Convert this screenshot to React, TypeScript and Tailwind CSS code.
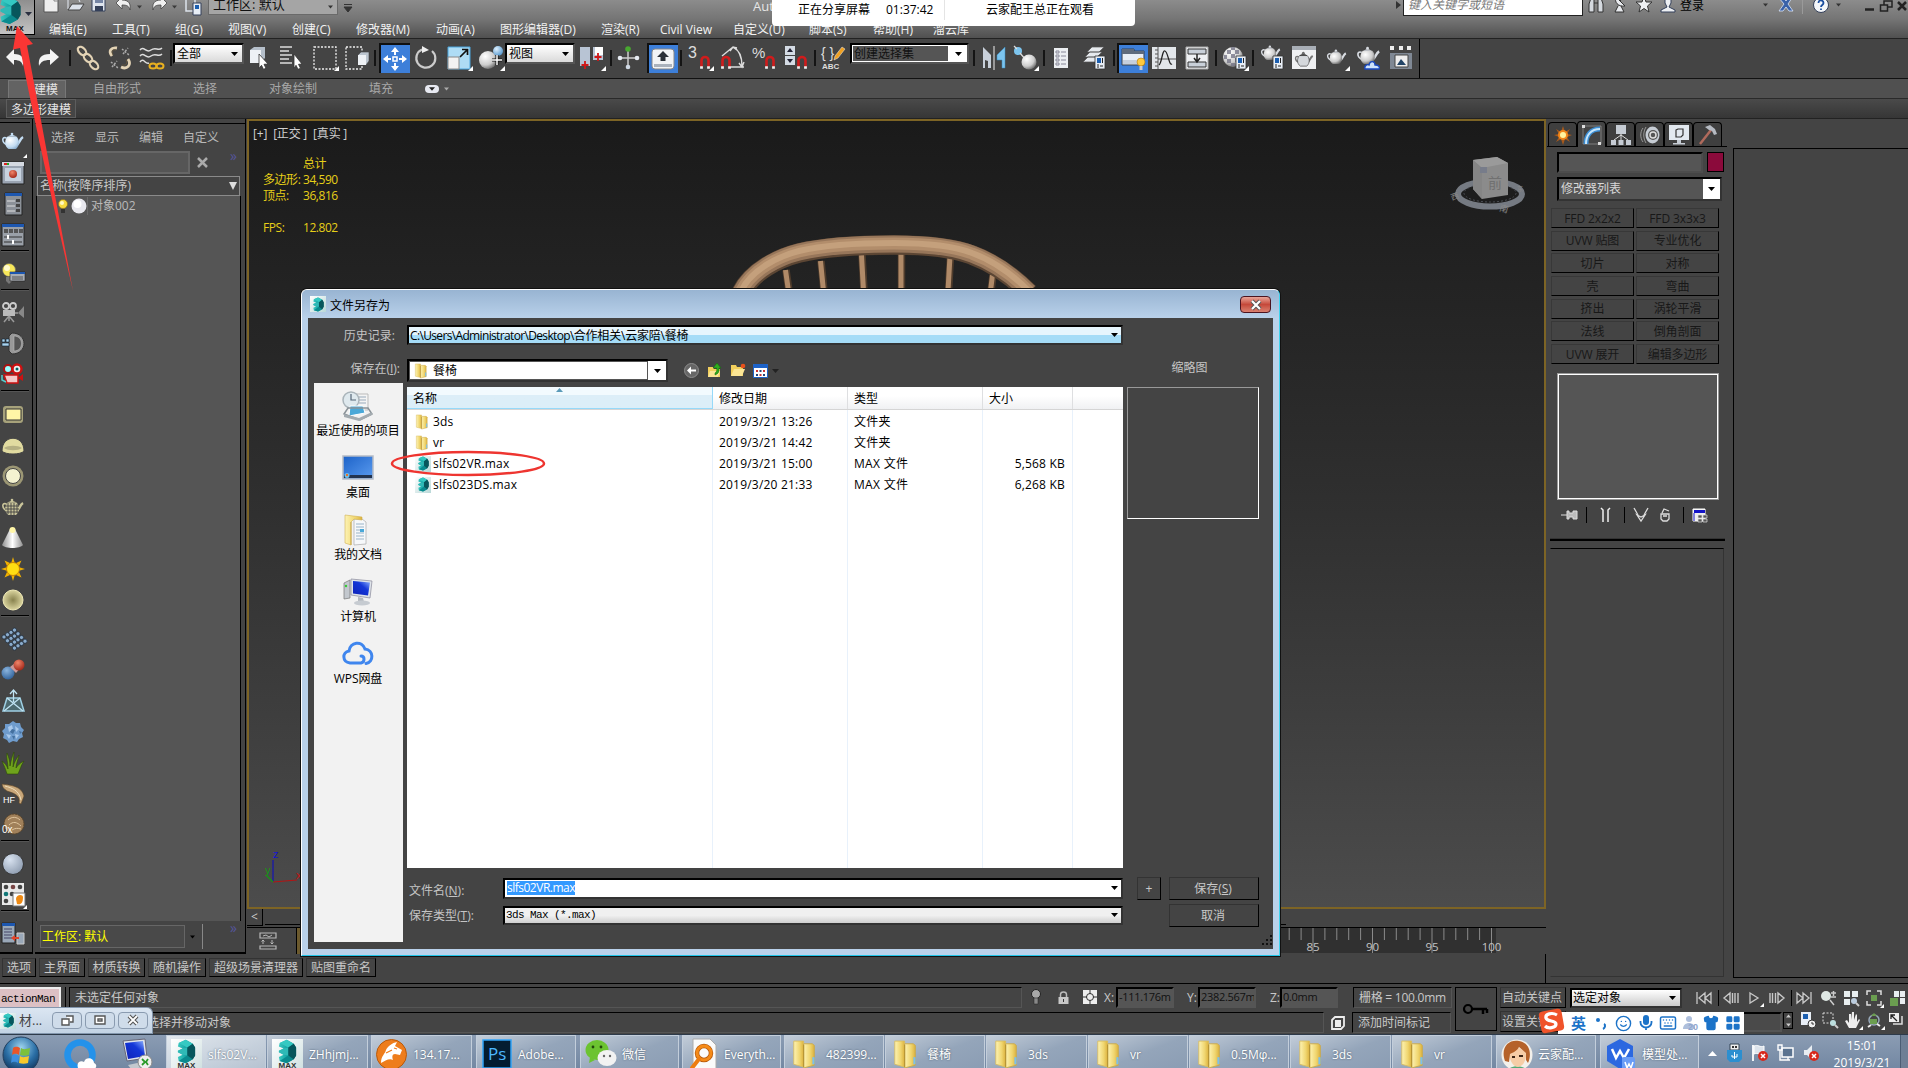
import React from "react";
import { Keyboard, Smile, Shirt, LayoutGrid } from "lucide-react";

type Kids = { children?: React.ReactNode };

const Svg = ({ w = 24, h = 24, vb, children }: Kids & { w?: number; h?: number; vb?: string }) => (
  <svg width={w} height={h} viewBox={vb ?? `0 0 ${w} ${h}`} className="block shrink-0 overflow-visible" fill="none">
    {children}
  </svg>
);

/* Shared gradients */
const Defs = () => (
  <svg width="0" height="0" className="absolute">
    <defs>
      <radialGradient id="gBall" cx="0.35" cy="0.3" r="0.8"><stop offset="0" stopColor="#fff" /><stop offset="0.6" stopColor="#ccc" /><stop offset="1" stopColor="#555" /></radialGradient>
      <radialGradient id="gBlueBall" cx="0.35" cy="0.3" r="0.8"><stop offset="0" stopColor="#dff1ff" /><stop offset="1" stopColor="#4a8fc8" /></radialGradient>
      <radialGradient id="gPaleBlue" cx="0.35" cy="0.3" r="0.9"><stop offset="0" stopColor="#ffffff" /><stop offset="0.6" stopColor="#c3dcf2" /><stop offset="1" stopColor="#6c93b8" /></radialGradient>
      <radialGradient id="gSteel" cx="0.35" cy="0.3" r="0.9"><stop offset="0" stopColor="#d8e2f0" /><stop offset="1" stopColor="#7f8ea3" /></radialGradient>
      <radialGradient id="gRed" cx="0.4" cy="0.3" r="0.8"><stop offset="0" stopColor="#f0856a" /><stop offset="1" stopColor="#9a1d10" /></radialGradient>
      <radialGradient id="gNavy" cx="0.4" cy="0.3" r="0.8"><stop offset="0" stopColor="#8ab4dd" /><stop offset="1" stopColor="#285a94" /></radialGradient>
      <radialGradient id="gCream" cx="0.5" cy="0.5" r="0.6"><stop offset="0" stopColor="#88824e" /><stop offset="1" stopColor="#ece6b0" /></radialGradient>
      <linearGradient id="gCone" x1="0" x2="1"><stop offset="0" stopColor="#8f8f8f" /><stop offset="0.5" stopColor="#ffffff" /><stop offset="1" stopColor="#8f8f8f" /></linearGradient>
      <linearGradient id="gFold" x1="0" x2="1"><stop offset="0" stopColor="#fdf3b4" /><stop offset="0.6" stopColor="#f0d670" /><stop offset="1" stopColor="#dcb23e" /></linearGradient>
      <linearGradient id="gTeal" x1="0" x2="1"><stop offset="0" stopColor="#3cc7c0" /><stop offset="0.5" stopColor="#11a3a3" /><stop offset="1" stopColor="#0b5d63" /></linearGradient>
      <linearGradient id="gScreen" x1="0" y1="1" x2="1" y2="0"><stop offset="0" stopColor="#0f22b8" /><stop offset="0.6" stopColor="#1437d8" /><stop offset="1" stopColor="#8fb4ff" /></linearGradient>
      <linearGradient id="gDesk" x1="0" y1="0" x2="1" y2="1"><stop offset="0" stopColor="#1c62c8" /><stop offset="1" stopColor="#5b9cf0" /></linearGradient>
      <radialGradient id="gOrb" cx="0.5" cy="0.3" r="0.75"><stop offset="0" stopColor="#9ed4ee" /><stop offset="0.55" stopColor="#2b6fa6" /><stop offset="1" stopColor="#0b2c50" /></radialGradient>
    </defs>
  </svg>
);

/* ---------- reusable pieces ---------- */
const MaxMark = ({ s = 16 }: { s?: number }) => (
  <Svg w={s} h={s} vb="0 0 16 16">
    <path d="M3 2.500L7.500.500 12 3l1.500 2.500v5L12 13l-4.500 2.500L3 14l-.5-2.500L5.500 10 2.500 8.500v-1L5.500 6 2.500 4.800z" fill="url(#gTeal)" />
    <path d="M3 2.500L7.500.500 12 3 8.500 5.500z" fill="#35c9c2" />
    <path d="M5.500 6l3-.5v5l-3-.5L2.500 8.500v-1z" fill="#2fb9b6" />
    <path d="M3 14l5.500-3.500L12 13l-4.500 2.500z" fill="#0a8a8e" />
    <path d="M12 3L8.500 5.500v5L12 13l1.500-2.500v-5z" fill="#07565c" />
  </Svg>
);
const MaxFile = () => (
  <div className="flex h-4 w-4 items-center justify-center bg-gradient-to-br from-white to-[#b9d8d8]"><MaxMark s={15} /></div>
);
const Folder = ({ w = 14, h = 17 }: { w?: number; h?: number }) => (
  <Svg w={w} h={h} vb="0 0 14 17">
    <path d="M1 1h5.500v14.500L1 14z" fill="url(#gFold)" stroke="#d8bd62" strokeWidth=".5" />
    <path d="M6.500 2.500h5l1 1v11L6.500 16z" fill="url(#gFold)" stroke="#c9a84a" strokeWidth=".5" />
    <path d="M6.500 3v12.500" stroke="#b89635" strokeWidth=".7" />
    <path d="M12 10v4" stroke="#7cc0ea" strokeWidth="1.200" />
  </Svg>
);
const Down = ({ c = "#000", w = 7 }: { c?: string; w?: number }) => (
  <Svg w={w} h={4} vb="0 0 7 4"><path d="M0 0h7L3.500 4z" fill={c} /></Svg>
);
const Corner = () => <path d="M26 20v5h-5z" fill="#fff" />;
const Teapot = ({ x = 0, y = 0, s = 1, f = "url(#gBall)", line = "#d8dce2" }: { x?: number; y?: number; s?: number; f?: string; line?: string }) => (
  <g transform={`translate(${x} ${y}) scale(${s})`}>
    <path d="M15.500 15c3-1 3-6 6.500-8" stroke={line} strokeWidth="2.400" />
    <path d="M5.500 8C1 6 0 12 6 15" stroke={line} strokeWidth="1.600" />
    <path d="M6.500 6.500h9c3 3 3.500 9-.5 12.500H7.500C3 16 3.500 9.500 6.500 6.500z" fill={f} />
    <path d="M7 6.500c2-2 6-2 8 0z" fill={line} /><circle cx="11" cy="4" r="1.300" fill={line} />
  </g>
);
const MiniPanel = ({ x, y }: { x: number; y: number }) => (
  <g transform={`translate(${x} ${y})`}>
    <path d="M0 0h10v13H0z" fill="#e8eef6" stroke="#333" strokeWidth=".8" />
    <path d="M2 2h4v5H2z" fill="#1c5fb0" /><path d="M7.500 2v5M2 9h2M2 11h2M5 10h3" stroke="#222" />
  </g>
);
const Magnet = ({ x, y }: { x: number; y: number }) => (
  <g transform={`translate(${x} ${y})`}>
    <path d="M1.500 11V4.500a3.500 3.500 0 017 0V11" stroke="#d01c1c" strokeWidth="2.600" />
    <path d="M.1 11.500h2.800M7.100 11.500h2.800" stroke="#eee" strokeWidth="2.500" />
  </g>
);

/* ---------- title bar + menus ---------- */
const menus: [string, string][] = [
  ["编辑(E)", "w-[63px]"], ["工具(T)", "w-[63px]"], ["组(G)", "w-[53px]"], ["视图(V)", "w-[64px]"], ["创建(C)", "w-[64px]"],
  ["修改器(M)", "w-[80px]"], ["动画(A)", "w-[64px]"], ["图形编辑器(D)", "w-[101px]"], ["渲染(R)", "w-[59px]"], ["Civil View", "w-[73px]"],
  ["自定义(U)", "w-[76px]"], ["脚本(S)", "w-[64px]"], ["帮助(H)", "w-[60px]"], ["溜云库", "w-[40px]"],
];

const Header = () => (
  <div className="flex h-[39px] shrink-0 border-b border-[#222] bg-gradient-to-b from-[#8c8c8c] via-[#757575] to-[#505050]">
    <div className="flex h-[35px] w-[35px] shrink-0 flex-col border-b border-r border-black bg-gradient-to-b from-[#8f8f8f] to-[#c4c4c4]">
      <div className="flex h-[24px] items-center">
        <div className="-ml-[4px] -mt-[4px]"><MaxMark s={29} /></div>
        <div className="mt-1"><Down c="#2a2f40" /></div>
      </div>
      <div className="pl-[6px] font-['Liberation_Sans'] text-[8px] font-bold leading-[9px] text-[#111]">MAX</div>
    </div>
    <div className="flex flex-1 flex-col">
      <div className="flex h-[17px] items-start">
        <div className="flex w-[173px] items-start pl-2">
          <div className="w-6"><Svg w={16} h={13}><path d="M1-4h14v16H1z" fill="#eee" stroke="#555" /><path d="M11-3v4h4" stroke="#888" /></Svg></div>
          <div className="w-6"><Svg w={18} h={13}><path d="M1 9V-2h10l2 4" stroke="#e6ecf5" /><path d="M1 10L5 4h12l-4 6z" fill="#dde3ec" stroke="#444" /></Svg></div>
          <div className="w-6"><Svg w={16} h={13}><path d="M1-3h13v14H1z" fill="#dfe5ee" stroke="#34405a" /><path d="M4 6h8v5H4z" fill="#34405a" /><path d="M4-2h8v5H4z" fill="#7585a5" /></Svg></div>
          <div className="flex w-[35px] items-center gap-1"><Svg w={18} h={13}><path d="M1 3l6-6v3c7 0 9 4 8 10-1-4-3-5-8-5v4z" fill="#f1f1f1" stroke="#444" strokeWidth=".8" /></Svg><Down c="#3a3a3a" w={5} /></div>
          <div className="flex w-[35px] items-center gap-1"><Svg w={18} h={13}><path d="M17 3l-6-6v3C4 0 2 4 3 10c1-4 3-5 8-5v4z" fill="#f1f1f1" stroke="#444" strokeWidth=".8" /></Svg><Down c="#3a3a3a" w={5} /></div>
          <div><Svg w={18} h={15}><path d="M1-2h9v13H1z" fill="none" stroke="#dde3ec" strokeWidth="1.500" /><path d="M8 3h8v12H8z" fill="#e8eef6" stroke="#34405a" /><path d="M10 5h4v4h-4z" fill="#1c5fb0" /></Svg></div>
        </div>
        <div className="flex h-[15px] w-[130px] items-center justify-between border border-t-0 border-[#6a6a6a] bg-[#a5a5a5] pl-1 pr-1 text-[13px] leading-none text-[#111]"><span className="-mt-[6px]">工作区: 默认</span><Down c="#333" w={5} /></div>
        <div className="ml-[6px] mt-[4px]"><Svg w={8} h={8}><path d="M0 .5h8M0 3h8L4 8z" stroke="#333" fill="#333" /></Svg></div>
        <div className="ml-[401px] text-[13px] leading-[12px] text-[#e6e6e6]">Aut</div>
        <div className="ml-auto flex h-[16px] w-[512px] items-start">
          <div className="mt-[1px] w-[7px]"><Svg w={5} h={8}><path d="M0 0l5 4-5 4z" fill="#333" /></Svg></div>
          <div className="h-[16px] w-[180px] border border-t-0 border-[#222] bg-white pl-1 text-[12px] italic leading-[10px] text-[#777]">键入关键字或短语</div>
          <div className="flex w-[97px] justify-between pl-[5px] pr-[4px]">
            <Svg w={16} h={13}><path d="M1 12V4l2-6h3v14zM10 12V-2h3l2 6v8zM6 3h4" fill="#d5d9df" stroke="#333" /></Svg>
            <Svg w={16} h={13}><path d="M4-3c-2 5 2 10 9 9zM6 6l-3 6h9L9 6M8 1l4-4" fill="#e8eaee" stroke="#333" /></Svg>
            <Svg w={16} h={13}><path d="M8-4l2 6h6l-4.500 4L13 12 8 8.500 3 12l1.500-6L0 2h6z" fill="#eef0f3" stroke="#333" /></Svg>
            <Svg w={16} h={13}><path d="M5-4h6v7l-2 4 6 3v2H1v-2l6-3-2-4z" fill="#eef0f3" stroke="#34405a" /></Svg>
          </div>
          <div className="w-[83px] text-[12px] leading-[11px] text-black">登录</div>
          <div className="mt-[3px] w-[15px]"><Down c="#333" w={5} /></div>
          <Svg w={15} h={12}><path d="M1-2l5 6-5 7h4l3-4 3 4h4L10 4l4-6h-4L8 1 6-2z" fill="#3a62a8" stroke="#dbe6fb" strokeWidth=".8" /></Svg>
          <div className="ml-[9px] h-[14px] w-px bg-[#9a9a9a]" />
          <div className="ml-[10px]"><Svg w={16} h={13}><circle cx="8" cy="5" r="7.500" fill="#f5f7fa" stroke="#34405a" /><path d="M5.500 3c0-4 5-3 5 0 0 2-2.500 2-2.500 4M8 8.500v1.500" stroke="#1c4fa0" strokeWidth="1.800" /></Svg></div>
          <div className="ml-[7px] mt-[3px]"><Down c="#333" w={5} /></div>
          <div className="ml-[23px] flex gap-[5px]">
            <Svg w={11} h={12}><path d="M1 9.500h9" stroke="#222" strokeWidth="2.500" /></Svg>
            <Svg w={12} h={12}><path d="M4 5V1h8v6H8M.5 5h7v6h-7z" stroke="#222" strokeWidth="1.500" /></Svg>
            <Svg w={10} h={12}><path d="M1 2l8 8M9 2l-8 8" stroke="#222" strokeWidth="2.500" /></Svg>
          </div>
        </div>
      </div>
      <div className="flex h-[21px] items-center pl-[14px] pt-[3px] text-[12px] leading-[17px] text-[#f2f2f2]">
        {menus.map(([m, w]) => <div key={m} className={w + " shrink-0 whitespace-nowrap"}>{m}</div>)}
      </div>
    </div>
  </div>
);

/* ---------- main toolbar ---------- */
const Cell = ({ w, children }: Kids & { w: string }) => <div className={w + " flex shrink-0 items-center justify-center"}>{children}</div>;
const Sep = () => <div className="flex w-1 shrink-0 justify-center"><div className="h-4 w-[2px] bg-[#141414]" /></div>;
const Active = ({ children }: Kids) => <div className="flex h-[30px] w-[31px] items-center justify-center border-l-2 border-t-2 border-[#101010] bg-[#3d7fd9]">{children}</div>;
const Combo = ({ w, text, dark }: { w: string; text: string; dark?: boolean }) => (
  <div className={w + " mb-[9px] flex h-[21px] shrink-0 items-center border-2 border-b-[#555] border-l-black border-r-[#555] border-t-black bg-gradient-to-b from-white to-[#dadada] text-[12px] leading-none text-black"}>
    {dark ? <div className="flex h-full flex-1 items-center border border-white bg-[#555] pl-px text-[#111]">{text}</div> : <div className="flex-1 pl-[2px]">{text}</div>}
    <div className={dark ? "flex h-full w-[18px] items-center justify-center bg-white" : "flex w-[16px] justify-center"}><Down /></div>
  </div>
);

const Toolbar = () => (
  <div className="flex h-10 shrink-0 border-b border-[#111] bg-[#444]">
    <div className="flex w-[1420px] items-center border-r border-black pb-px">
      <Cell w="w-[28px]"><Svg><path d="M4 11l8-8v5c8 0 11 4 9 12-1-4-3-6-9-6v5z" fill="#f4f4f4" /></Svg></Cell>
      <Cell w="w-[40px]"><Svg><path d="M23 11l-9-8v5C5 8 2 12 3 20c2-4 4-6 11-6v5z" fill="#f4f4f4" /></Svg></Cell>
      <Sep />
      <Cell w="w-[32px]"><Svg><g stroke="#e3d3b5" strokeWidth="2.200"><ellipse cx="6" cy="5" rx="5" ry="3.200" transform="rotate(45 6 5)" /><ellipse cx="12" cy="12" rx="5" ry="3.200" transform="rotate(45 12 12)" /><ellipse cx="18" cy="19" rx="5" ry="3.200" transform="rotate(45 18 19)" /></g></Svg></Cell>
      <Cell w="w-[31px]"><Svg><path d="M9 2C3 1 0 5 4 10M13 21c6 3 11-2 7-8" stroke="#e3d3b5" strokeWidth="2.800" /><path d="M8 4c-3-1-5 1-3 5M14 19c4 1 6-2 4-5" stroke="#6b5a3c" strokeWidth=".8" /><path d="M14 3l7 6M15 8l5-6M3 16l7 6M4 21l5-6" stroke="#aaa" strokeDasharray="2 1.500" strokeWidth="1.500" /></Svg></Cell>
      <Cell w="w-[34px]"><Svg><path d="M0 4c4-5 6 4 11 0s7 2 11-2M0 10c4-5 6 4 11 0s7 2 11-2M0 16c4-5 5 3 9 1" stroke="#ddd" strokeWidth="1.500" /><ellipse cx="13" cy="20" rx="3.500" ry="2.600" stroke="#e8b020" strokeWidth="2" /><ellipse cx="20" cy="20" rx="3.500" ry="2.600" stroke="#e8b020" strokeWidth="2" /></Svg></Cell>
      <Sep />
      <Combo w="w-[71px]" text="全部" />
      <Cell w="w-[30px]"><Svg><path d="M3 4l4-3h11v11l-4 4H3z" fill="#b5bfca" /><path d="M3 4h11v13H3z" fill="#eef1f5" /><path d="M12 8l9 10-4 .3 2 4-2.500 1-2-4-2.500 3z" fill="#fff" stroke="#333" strokeWidth=".8" /></Svg></Cell>
      <Cell w="w-[34px]"><Svg><path d="M1 1h12M1 5h9M1 9h12M1 13h9M1 17h12" stroke="#ddd" strokeWidth="1.500" /><path d="M15 8l8 10-3.500.3 2 4-2.500 1-2-4-2 3z" fill="#fff" stroke="#333" strokeWidth=".8" /></Svg></Cell>
      <Cell w="w-[33px]"><Svg><path d="M1 1h22v22H1z" stroke="#eee" strokeWidth="1.300" strokeDasharray="2 1.500" /><Corner /></Svg></Cell>
      <Cell w="w-[32px]"><Svg><path d="M1 1h16v22H1z" stroke="#eee" strokeWidth="1.300" strokeDasharray="2 1.500" /><path d="M13 9l3-3h8v9l-3 4h-8z" fill="#bcc5cf" stroke="#444" strokeWidth=".6" /><path d="M13 9h8v10h-8z" fill="#eef1f5" /></Svg></Cell>
      <Sep />
      <Cell w="w-[34px]"><Active><Svg><path d="M12 0l4 5h-3v3h-2V5H8zM12 24l4-5h-3v-3h-2v3H8zM0 12l5-4v3h3v2H5v3zM24 12l-5-4v3h-3v2h3v3z" fill="#fff" /><path d="M10 10h4v4h-4z" stroke="#fff" strokeWidth="1.500" /></Svg></Active></Cell>
      <Cell w="w-[30px]"><Svg><path d="M8 3.500A9.500 9.500 0 1018 5" stroke="#ccc" strokeWidth="2.200" /><path d="M8 0l7 4-7 3z" fill="#eee" /></Svg></Cell>
      <Cell w="w-[36px]"><Svg><path d="M1 1h22v22H1z" fill="#aedcf5" stroke="#4aa5dd" /><path d="M1 11h11v12H1z" fill="#f2f2f2" stroke="#888" /><path d="M13 11l7-7M15 3.500h5.500V9" stroke="#111" strokeWidth="1.700" /><Corner /></Svg></Cell>
      <Cell w="w-[28px]"><Svg><circle cx="9" cy="14" r="9" fill="url(#gBall)" /><circle cx="19" cy="5" r="5" fill="url(#gBlueBall)" /><path d="M18 9v10M13 14h10" stroke="#111" strokeWidth="3" /><path d="M18 9v10M13 14h10" stroke="#fff" strokeWidth="1.500" /><Corner /></Svg></Cell>
      <Combo w="w-[70px]" text="视图" />
      <Cell w="w-[34px]"><Svg><path d="M0 1h10v19H0zM13 1h10v13H13z" fill="#b8c4d4" /><path d="M15 1h8v8h-8z" fill="#fff" /><path d="M5 15v8M1.500 19h7M18 7v8M14.500 11h7" stroke="#d01818" strokeWidth="1.800" /><Corner /></Svg></Cell>
      <Sep />
      <Cell w="w-[32px]"><Svg><path d="M11 3v18M2 12h19" stroke="#ccc" strokeWidth="1.500" /><circle cx="11" cy="3" r="2.800" fill="#48a830" /><circle cx="3" cy="12" r="2.300" fill="#e6ebf2" /><circle cx="20" cy="12" r="2.300" fill="#e6ebf2" /><circle cx="11" cy="21" r="2.300" fill="#cfd8e4" /></Svg></Cell>
      <Cell w="w-[34px]"><Active><Svg><rect x="1" y="2" width="22" height="20" rx="3" fill="#f2f4f6" stroke="#888" /><path d="M3 17h18v3H3z" fill="#aab2bc" /><path d="M12 4l6 6h-3.500v4h-5v-4H6z" fill="#2a3038" /></Svg></Active></Cell>
      <Sep />
      <Cell w="w-[34px]"><Svg><text x="0" y="12" fontSize="16" fill="#ddd" fontFamily="Liberation Sans">3</text><Magnet x={12} y={10} /><Corner /></Svg></Cell>
      <Cell w="w-[31px]"><Svg><path d="M1 10L12 1M8 21h15M12 1c6 3 9 10 9 19M9 5l3-4 4 1M18 17l3 4 2-5" stroke="#ddd" strokeWidth="1.400" /><Magnet x={0} y={10} /></Svg></Cell>
      <Cell w="w-[31px]"><Svg><text x="0" y="12" fontSize="15" fill="#ddd" fontFamily="Liberation Sans">%</text><Magnet x={13} y={10} /></Svg></Cell>
      <Cell w="w-[34px]"><Svg><path d="M1 0h10v9H1zM1 10h10v9H1z" fill="#d4dbe4" /><path d="M6 2l3 4H3zM6 17l3-4H3z" fill="#223" /><Magnet x={13} y={10} /></Svg></Cell>
      <Sep />
      <Cell w="w-[33px]"><Svg><text x="-1" y="12" fontSize="14" fill="#ddd" fontFamily="Liberation Sans">{"{ }"}</text><text x="0" y="23" fontSize="8" fontWeight="bold" fill="#ddd" fontFamily="Liberation Sans">ABC</text><path d="M12 14l1-4 7-9 3 2-7 9z" fill="#f0a020" stroke="#eee" strokeWidth=".5" /></Svg></Cell>
      <Combo w="w-[119px]" text="创建选择集" dark />
      <Cell w="w-[10px]"><div className="h-4 w-[2px] bg-[#141414]" /></Cell>
      <Cell w="w-[29px]"><Svg><path d="M1 1l8 8v13H6v-7l-3-1v8H1z" fill="#c8d0da" /><path d="M12 0v24" stroke="#eee" /><path d="M23 1l-8 8v5h5v8h3z" fill="#7cc4ee" stroke="#3a8cc0" strokeWidth=".5" /></Svg></Cell>
      <Cell w="w-[34px]"><Svg><circle cx="5" cy="5" r="4" fill="#7cc4ee" /><path d="M1 0l3 3M7 7l5 6" stroke="#ddd" strokeWidth="1.300" /><circle cx="16" cy="16" r="7.500" fill="url(#gBall)" /><Corner /></Svg></Cell>
      <Sep />
      <Cell w="w-[30px]"><Svg><path d="M5 2h14v20H5z" fill="#eceff2" /><path d="M7 5h3v2H7zM7 9h3v2H7zM7 13h3v2H7zM7 17h3v2H7zM12 6h5M12 10h5M12 14h5M12 18h5" stroke="#889" /></Svg></Cell>
      <Cell w="w-[36px]"><Svg><path d="M5 6l5-5h12l-5 5zM3 11l5-5h12l-5 5zM1 16l5-5h12l-5 5z" fill="#e6eaee" stroke="#555" strokeWidth=".7" /><MiniPanel x={13} y={10} /></Svg></Cell>
      <Sep />
      <Cell w="w-[32px]"><Active><Svg><path d="M1 2h12v2h10v14H1z" fill="#c5cfdd" stroke="#333" strokeWidth=".8" /><path d="M1 2h12v2h10v3H1z" fill="#5f6b7c" /><path d="M2 7h20v6H2z" fill="#e8eef6" /><circle cx="20" cy="15" r="4" fill="#ffc93c" stroke="#b07810" strokeWidth=".6" /><path d="M18.500 19h3v4h-3z" fill="#ccc" /></Svg></Active></Cell>
      <Cell w="w-[32px]"><Svg><path d="M0 1h24v22H0z" fill="#e2e6ea" /><path d="M3 4h3M3 8h3M3 12h3M3 16h3M3 20h3M6 1v22M6 13h18" stroke="#555" /><path d="M7 19C10 17 10 4 13 5s4 15 7 13" stroke="#222" strokeWidth="1.300" /></Svg></Cell>
      <Cell w="w-[34px]"><Svg><path d="M1 1h22v22H1z" fill="#eef0f3" stroke="#aaa" /><path d="M3 3h18v5H3zM3 16h18v5H3z" fill="#c9d0d9" stroke="#333" /><path d="M12 8v7M9 12l3 4 3-4" stroke="#222" strokeWidth="1.500" /></Svg></Cell>
      <Sep />
      <Cell w="w-[33px]"><Svg><circle cx="10" cy="11" r="10" fill="url(#gBall)" /><path d="M4 4h4v4H4zM12 4h4v4h-4zM8 8h4v4H8zM1 9h3v4H1zM4 13h4v4H4zM12 12h4v4h-4zM8 17h4v3H8zM8 1h4v3H8z" fill="#778" opacity=".8" /><MiniPanel x={13} y={10} /><Corner /></Svg></Cell>
      <Sep />
      <Cell w="w-[33px]"><Svg><Teapot x={0} y={-3} s={0.9} /><MiniPanel x={13} y={10} /></Svg></Cell>
      <Cell w="w-[32px]"><Svg><path d="M0 0h24v23H0z" fill="#f0f1f3" /><path d="M0 0h24v4H0z" fill="#a8aeb6" /><g stroke="#333" strokeWidth=".7"><Teapot x={2} y={4} s={0.85} line="#777" f="#d5d8dc" /></g></Svg></Cell>
      <Cell w="w-[32px]"><Svg><Teapot x={2} y={1} s={0.9} /><Corner /></Svg></Cell>
      <Cell w="w-[32px]"><Svg><Teapot x={0} y={-2} s={1.05} /><path d="M9 23c-1-4 3-5 4-4 1-5 6-4 6 0 4 0 5 2 4 4z" fill="#cfe3fb" stroke="#1848c0" strokeWidth="1.300" /></Svg></Cell>
      <Cell w="w-[33px]"><Svg><path d="M1 0h4v4H1zM10 0h4v4h-4zM18 0h4v4h-4z" fill="#eee" /><path d="M1 7h22v16H1z" fill="#7f8894" /><path d="M6 9h13v12H6z" fill="#eee" stroke="#444" /><path d="M8 19l4-6 5 6z" fill="#246" /></Svg></Cell>
    </div>
  </div>
);

/* ---------- ribbon ---------- */
const Ribbon = () => (
  <>
    <div className="flex h-5 shrink-0 items-end border-b border-[#2a2a2a] bg-[#505050] text-[12px] leading-[18px] text-[#a8a8a8]">
      <div className="ml-2 h-[18px] w-[58px] border border-b-0 border-[#777] bg-[#636363] pl-[25px] text-[#e4e4e4]">建模</div>
      <div className="ml-[27px] w-[100px]">自由形式</div>
      <div className="w-[76px]">选择</div>
      <div className="w-[100px]">对象绘制</div>
      <div className="w-[56px]">填充</div>
      <div className="mb-[5px] flex h-2 w-[14px] items-center justify-center rounded-sm bg-[#e8eaf2]"><Down c="#222" w={6} /></div>
      <div className="mb-[7px] ml-[5px]"><Down c="#aaa" w={5} /></div>
    </div>
    <div className="h-5 shrink-0 border-b border-[#222] bg-gradient-to-b from-[#4a4a4a] to-[#363636] pl-[6px] text-[12px] text-[#e4e4e4]">
      <div className="flex h-[19px] w-[70px] items-center justify-center whitespace-nowrap border border-[#5d5d5d] bg-[#454545] pt-px leading-[17px]">多边形建模</div>
    </div>
  </>
);

/* ---------- left vertical tools ---------- */
const sideGroups: React.ReactNode[][] = [
  [
    <Svg><Teapot x={0} y={0} s={1} f="url(#gPaleBlue)" line="#c3dcf2" /><path d="M26 24v4h-4z" fill="#fff" /></Svg>,
    <Svg><path d="M1 1h22v22H1z" fill="#9aa4b2" stroke="#222" /><path d="M1 1h22v4H1z" fill="#d5dae2" /><path d="M3 3h3" stroke="#d22" strokeWidth="2" /><path d="M6 3h2" stroke="#2a2" strokeWidth="2" /><path d="M4 7h16v13H4z" fill="#c7d2df" /><circle cx="12" cy="13" r="4" fill="url(#gRed)" /></Svg>,
    <Svg><path d="M4 1h17v22H4z" fill="#8c9198" stroke="#222" /><path d="M4 1h17v3H4z" fill="#1d57b0" /><path d="M6 9h8M6 14h8M6 19h8" stroke="#ddd" /><path d="M15 7h4v3h-4zM15 12h4v3h-4zM15 17h4v3h-4z" fill="#444" /></Svg>,
    <Svg><path d="M1 1h22v22H1z" fill="#9aa0a8" stroke="#222" /><path d="M1 1h22v3H1z" fill="#1d57b0" /><path d="M3 6h4v4H3zM8 6h4v4H8zM13 6h4v4h-4zM18 6h4v4h-4z" fill="#555" /><path d="M3 14h18M3 19h18" stroke="#333" /><path d="M7 12v4M12 17v4" stroke="#fff" strokeWidth="2" /></Svg>,
  ],
  [<Svg><circle cx="8" cy="8" r="6.500" fill="#f7e75a" stroke="#666" strokeWidth=".6" /><circle cx="6" cy="6" r="3" fill="#fffbd0" /><path d="M5 15h6v4l-3 3-3-3z" fill="#777" /><path d="M9 10h15v9H9z" fill="#a8adb4" stroke="#222" strokeWidth=".6" /><path d="M9 10h15v2H9z" fill="#1d57b0" /><path d="M11 15h11M11 17h11" stroke="#555" /></Svg>],
  [
    <Svg><circle cx="5" cy="5" r="3" stroke="#ccc" strokeWidth="1.800" /><circle cx="12" cy="5" r="3" stroke="#ccc" strokeWidth="1.800" /><path d="M2 9h12v6H2z" fill="#bbb" /><path d="M14 12h3M8 15l-5 6M8 15l5 6M8 15v5" stroke="#999" strokeWidth="1.500" /><path d="M23 5v12l-6-5z" fill="#888" /></Svg>,
    <Svg><path d="M11 1c16 0 16 21 0 21l-3-3V4z" fill="#999" stroke="#333" /><path d="M13 4c10 0 10 15 0 15z" fill="#555" stroke="#bbb" strokeWidth=".6" /><path d="M1 7h3v3H1zM5 7h3v3H5zM1 11h7v3H1z" fill="#a9d3ee" stroke="#123" strokeWidth=".6" /></Svg>,
    <Svg><circle cx="7" cy="6" r="4" fill="#9ff" stroke="#a11" strokeWidth="2" /><circle cx="16" cy="6" r="4.500" fill="#eee" stroke="#c11" strokeWidth="2.500" /><circle cx="16" cy="6" r="1.500" fill="#066" /><path d="M3 12h14v8H6z" fill="#f2c9c9" stroke="#c11" strokeWidth="1.500" /><path d="M22 11v7l-5-3z" fill="#c11" /><path d="M1 12v5l4 2" stroke="#5cc" strokeWidth="1.500" /></Svg>,
  ],
  [
    <Svg><rect x="2" y="4" width="20" height="17" rx="3" fill="#a7a27b" /><path d="M5 7h15v11H5z" fill="#fff5a6" stroke="#333" /></Svg>,
    <Svg><path d="M1 18C1 1 23 1 23 18c-3 4-19 4-22 0z" fill="#e1dba0" stroke="#444" /><path d="M3 15c4-3 14-3 18 0-4 3-14 3-18 0z" fill="#b5b082" /></Svg>,
    <Svg><circle cx="12" cy="12" r="10.500" fill="#9c9774" /><circle cx="12" cy="12" r="7.500" fill="#f4f2d0" stroke="#444" /></Svg>,
    <Svg><g transform="translate(0 1)"><Teapot f="#c9c49a" line="#c9c49a" /><path d="M7 7v11M10 7v12M13 7v12M16 8v9M4 10h14M4 13h14M5 16h12" stroke="#444" strokeWidth=".9" /></g></Svg>,
    <Svg><path d="M9 3h5l8 16c-3 4-18 4-21 0z" fill="url(#gCone)" /><circle cx="11.500" cy="4" r="3" fill="#fff6a8" /></Svg>,
    <Svg><path d="M12 0l1.500 5h-3zM12 24l1.500-5h-3zM0 12l5-1.500v3zM24 12l-5-1.500v3zM3.500 3.500L9 6 6 9zM20.500 3.500L15 6l3 3zM3.500 20.500L9 18l-3-3zM20.500 20.500L15 18l3-3z" fill="#f0b000" /><circle cx="12" cy="12" r="6.500" fill="#ffdd12" stroke="#d68c00" /></Svg>,
    <Svg><circle cx="12" cy="12" r="10" fill="url(#gCream)" stroke="#eee8b5" /></Svg>,
  ],
  [
    <Svg><g fill="#8aabcb" stroke="#1c2a3a" strokeWidth=".7">{[0, 1, 2, 3].map((i) => [0, 1, 2, 3].map((j) => <circle key={i + "-" + j} cx={3 + i * 3.500 + j * 3.500} cy={10 - i * 2.300 + j * 3.700} r="2.100" />))}</g></Svg>,
    <Svg><circle cx="7" cy="15" r="6.500" fill="url(#gNavy)" /><path d="M9 9l6 6 5-6-6-4z" fill="#c99a9a" /><circle cx="18" cy="7" r="5.500" fill="url(#gRed)" /></Svg>,
    <Svg><path d="M6 9h13l4 13H2z" fill="#4d6a70" stroke="#9fd0e4" strokeWidth="1.500" /><path d="M6 9l16 13M19 9L3 22M12.500 13V1M9 5l3.500-4L16 5" stroke="#bfe2f2" strokeWidth="1.300" /></Svg>,
    <Svg><path d="M12 1l3 2 4 0 1 4 3 3-2 3 1 4-4 2-2 3-4-1-4 2-2-3-4-2 1-4-2-3 3-3 0-4 4 0z" fill="#6f9ccd" /><path d="M7 7l4-2 1 4-4 3zM14 6l4 3-3 3zM5 14l5 1-2 4zM14 14l4 1-3 4z" fill="#a9c9ec" /><path d="M11 9l3 1-2 4-3-2zM11 16l3 0-1 4zM18 11l3 1-2 2z" fill="#44709f" /></Svg>,
    <Svg><path d="M6 23C4 16 2 13 1 10c3 2 5 5 6 8C7 12 5 6 6 2c2 4 3 9 3 13 1-5 2-10 4-14 0 5-1 10-1 15 1-4 3-8 6-12-1 5-3 9-3 13 2-3 4-5 8-7-3 4-4 9-6 13z" fill="#6fa31c" stroke="#2e4a08" strokeWidth=".6" /></Svg>,
    <Svg><path d="M1 2c8 1 20 2 22 12l-3 8-2-1c2-8-6-10-12-12C3 7 1 5 1 2z" fill="#c8a77a" stroke="#5d4426" strokeWidth=".6" /><path d="M4 4c7 2 14 4 16 14" stroke="#eedcb8" /><text x="2" y="21" fontSize="9" fill="#fff" fontFamily="Liberation Sans">HF</text></Svg>,
    <Svg><circle cx="13" cy="11" r="10" fill="#a0805a" stroke="#5d4426" strokeDasharray="2 1" /><path d="M7 7c4-4 9-3 12 0M8 12c4-4 8-3 12 1M11 17c3-2 6-2 9-1" stroke="#dfc49d" /><text x="1" y="20" fontSize="10" fill="#fff" fontFamily="Liberation Sans">0x</text></Svg>,
  ],
  [
    <Svg><circle cx="12" cy="12" r="10.500" fill="url(#gSteel)" stroke="#333" /></Svg>,
    <Svg><path d="M1 0h22v22H1z" fill="#e9e9e9" /><g fill="#444"><circle cx="5" cy="4" r="2.300" /><circle cx="12" cy="4" r="2.300" fill="#744" /><circle cx="19" cy="4" r="2.300" /><circle cx="5" cy="11" r="2.300" fill="#177" /><circle cx="11" cy="11" r="2.300" /><circle cx="5" cy="18" r="2.300" /></g><path d="M12 10h12v13H12z" fill="#fff" stroke="#777" /><path d="M15 16c0-5 7-5 7-2 0 6-2 8-6 7z" fill="#ee8a14" /><path d="M26 22v4h-4z" fill="#fff" /></Svg>,
  ],
  [<Svg><path d="M1 1h13v20H1z" fill="#9aa8b8" stroke="#222" /><path d="M1 1h13v3H1z" fill="#1d57b0" /><path d="M3 7h8M3 10h8M3 13h8M3 16h8" stroke="#446" /><path d="M16 11h7v11h-7z" fill="#9aa8b8" stroke="#ccc" /><path d="M10 16l4-3v2h4v2h-4v2z" fill="#e2442a" /></Svg>],
];

const SideTools = () => (
  <div className="flex w-[33px] shrink-0 flex-col border-b-2 border-r border-black bg-[#444] pt-[3px]">
    <div className="h-[4px] w-[30px] shrink-0 border-t border-black" />
    {sideGroups.map((g, i) => (
      <React.Fragment key={i}>
        {i > 0 && <div className="h-2 shrink-0"><div className="ml-px h-[2px] w-7 border-b border-[#555] bg-black" /></div>}
        {g.map((ic, j) => <div key={j} className="flex h-[31px] shrink-0 items-center pl-px">{ic}</div>)}
      </React.Fragment>
    ))}
  </div>
);

const Explorer = () => (
  <div className="ml-[2px] flex w-[211px] shrink-0 flex-col border-b-2 border-r border-black bg-[#444] pt-1 text-[12px] text-[#b8b8b8]">
    <div className="flex h-7 items-center border-t border-black pl-4">
      <div className="w-11">选择</div><div className="w-11">显示</div><div className="w-11">编辑</div><div>自定义</div>
    </div>
    <div className="flex h-[25px]">
      <div className="ml-[5px] h-[23px] w-[150px] border-2 border-[#666] bg-[#555]" />
      <div className="ml-[7px] mt-[6px]"><Svg w={11} h={11}><path d="M1 1l9 9M10 1l-9 9" stroke="#aaa" strokeWidth="2.500" /></Svg></div>
      <div className="ml-[22px] text-[14px] leading-[10px] text-[#55559c]">»</div>
    </div>
    <div className="ml-[2px] flex h-[20px] w-[203px] items-center justify-between border border-[#8a8a8a] bg-[#444] pl-[2px] pr-[2px] text-[12px] text-[#c8c8c8]">
      <span>名称(按降序排序)</span><Svg w={8} h={9}><path d="M0 0h8L4 8z" fill="#ddd" /></Svg>
    </div>
    <div className="ml-[1px] w-[205px] flex-1 border-l border-r border-black bg-[#555]">
      <div className="flex h-5 items-center pl-[21px]">
        <Svg w={10} h={15}><circle cx="5" cy="5" r="4.500" fill="#f6d93e" stroke="#8a6b10" strokeWidth=".6" /><circle cx="4" cy="4" r="2" fill="#fff9c4" /><path d="M3 10h4v4H3z" fill="#333" /></Svg>
        <div className="ml-[3px]"><Svg w={16} h={16}><circle cx="8" cy="8" r="7.500" fill="#e8e8ee" /><circle cx="6.500" cy="6" r="4" fill="#fff" /></Svg></div>
        <div className="border-l border-[#6a6a6a] pl-[3px] text-[12px] leading-[18px] text-[#b9b9b9]">对象002</div>
      </div>
    </div>
    <div className="flex h-[31px] items-center">
      <div className="ml-[5px] flex h-[23px] w-[145px] items-center border border-[#666] bg-[#494949] pl-[1px] text-[12px] text-[#ffff00]">工作区: 默认</div>
      <div className="ml-[5px]"><Down w={5} /></div>
      <div className="ml-[7px] h-[25px] w-px bg-[#888]" />
      <div className="-mt-[18px] ml-[27px] text-[14px] leading-[10px] text-[#55559c]">»</div>
    </div>
  </div>
);

/* ---------- viewport ---------- */
const backRail = "M22 50C33 28 60 15 80 10C105 4 140 2 175 2C205 2 235 5 253 12C275 20 292 32 310 50";
const Chair = () => (
  <Svg w={340} h={50}>
    <path d="M67 27l3 21M102 18l3 30M143 12l2 36M182.500 10v38M231.500 13l-2 35M274 32l-2 16" stroke="#4e3b2b" strokeWidth="7.500" />
    <path d="M66.500 27l3 21M101.500 18l3 30M142.500 12l2 36M182 10v38M231 13l-2 35M273.500 32l-2 16" stroke="#b08a68" strokeWidth="5" />
    <path d={backRail} stroke="#5c4634" strokeWidth="19.500" />
    <path d={backRail} stroke="#97765a" strokeWidth="17" transform="translate(0 -1)" />
    <path d={backRail} stroke="#b28d6b" strokeWidth="12" transform="translate(0 -1.500)" />
    <path d={backRail} stroke="#c4a07c" strokeWidth="6" transform="translate(0 -2)" />
  </Svg>
);
const ViewCube = () => (
  <Svg w={80} h={56}>
    <ellipse cx="40" cy="37" rx="32" ry="12.500" stroke="#757a82" strokeWidth="6" />
    <ellipse cx="40" cy="36" rx="26" ry="9" fill="#1d1d1d" stroke="#4c4f55" strokeDasharray="2 2" />
    <path d="M23 3l24-3 11 6v32l-26 4-9-10z" fill="#8b8b8b" />
    <path d="M23 3l9 8 26-5-11-6z" fill="#9a9a9a" /><path d="M23 3l9 8v31l-9-10z" fill="#858585" />
    <path d="M30 10h7v6h-7z" fill="#777c8a" />
    <text x="38" y="31" fontSize="14" fill="#707070" fontFamily="Noto Sans CJK SC">前</text>
    <text x="1" y="42" fontSize="8" fill="#888" fontFamily="Noto Sans CJK SC" transform="rotate(-20 6 40)">西</text>
    <text x="50" y="55" fontSize="9" fill="#888" fontFamily="Noto Sans CJK SC" transform="rotate(15 54 50)">南</text>
    <text x="67" y="34" fontSize="6" fill="#888" fontFamily="Noto Sans CJK SC">东</text>
  </Svg>
);

const ticks = Array.from({ length: 18 }, (_, i) => 83 + i);

const Viewport = () => (
  <div className="ml-px flex w-[1299px] shrink-0 flex-col bg-[#444]">
    <div className="relative h-[790px] border-2 border-[#7d6425] bg-gradient-to-b from-[#1a1a1a] via-[#303030] to-[#4c4c4c]">
      <div className="flex gap-[6px] pl-[4px] pt-[3px] text-[12px] leading-[19px] tracking-[-0.2px] text-[#d0d0d0]"><span>[+]</span><span>[正交 ]</span><span>[真实 ]</span></div>
      <div className="grid w-[120px] grid-cols-[40px_1fr] pl-[14px] pt-[13px] text-[12px] leading-4 tracking-[-0.45px] text-[#e6cf18]">
        <span /><span>总计</span><span>多边形:</span><span>34,590</span><span>顶点:</span><span>36,816</span>
        <span className="h-4" /><span /><span>FPS:</span><span>12.802</span>
      </div>
      <div className="absolute left-[1201px] top-[36px]"><ViewCube /></div>
      <div className="absolute left-[470px] top-[122px]"><Chair /></div>
      <div className="absolute bottom-[20px] left-[14px]">
        <Svg w={40} h={40}><path d="M10 35V13" stroke="#1414b4" strokeWidth="1.200" /><path d="M10 35l24-2" stroke="#b41414" strokeWidth="1.200" /><path d="M10 35l-7-7" stroke="#149614" strokeWidth="1.200" /><text x="10" y="11" fontSize="11" fill="#1414d0" fontFamily="Liberation Sans">z</text><text x="2" y="27" fontSize="11" fill="#149614" fontFamily="Liberation Sans">y</text><text x="33" y="32" fontSize="11" fill="#c01414" fontFamily="Liberation Sans">x</text></Svg>
      </div>
    </div>
    <div className="flex h-[19px] items-start border-b border-black">
      <div className="flex h-[17px] w-4 items-center justify-center border-b border-r border-black text-[12px] text-[#ccc]">&lt;</div>
      <div className="ml-[2px] h-4 flex-1 border-b border-black" />
      <div className="w-[260px]" />
    </div>
    <div className="flex h-[26px]">
      <div className="flex w-[50px] items-center border-r border-black pl-[12px]"><Svg w={18} h={18}><path d="M1 1h16v5H1zM1 14h16v3H1z" stroke="#b8b8b8" strokeWidth="1.200" /><path d="M4 4l3-1 3 2 3-2M4 12V8M2.500 9.500L4 8l1.500 1.500M13 8v4M11.500 10.500L13 12l1.500-1.500" stroke="#b8b8b8" /></Svg></div>
      <div className="w-[736px] bg-[#7d6425]/70" />
      <div className="h-[25px] w-[463px] bg-[#303030]">
        <Svg w={463} h={25}>
          {ticks.map((t) => {
            const x = 280 + (t - 85) * 11.900;
            return (
              <g key={t}>
                <path d={t % 5 ? `M${x} 0v12` : `M${x} 0v25`} stroke="#8a8a8a" />
                {t % 5 === 0 && <text x={x} y="23" fontSize="11.500" textAnchor="middle" fill="#c4c4c4" fontFamily="Open Sans">{t}</text>}
              </g>
            );
          })}
        </Svg>
      </div>
    </div>
  </div>
);

const plugins: [string, string][] = [["选项", "w-[34px]"], ["主界面", "w-[46px]"], ["材质转换", "w-[57px]"], ["随机操作", "w-[58px]"], ["超级场景清理器", "w-[94px]"], ["贴图重命名", "w-[70px]"]];
const PluginRow = () => (
  <div className="flex h-[30px] items-start gap-[3px] border-b border-r border-black bg-[#444] pl-[2px] pt-1 text-[12px] text-[#c8c8c8]">
    {plugins.map(([p, w]) => <div key={p} className={w + " flex h-[19px] items-center justify-center whitespace-nowrap border border-b-black border-l-[#333] border-r-black border-t-[#333]"}>{p}</div>)}
  </div>
);

/* ---------- command panel ---------- */
const modifiers = ["FFD 2x2x2", "FFD 3x3x3", "UVW 贴图", "专业优化", "切片", "对称", "壳", "弯曲", "挤出", "涡轮平滑", "法线", "倒角剖面", "UVW 展开", "编辑多边形"];
const cmdTabs = [
  <Svg w={20} h={20}><path d="M10 1l2 6 5-3-3 5 5 1-5 2 3 5-5-3-2 6-2-6-5 3 3-5-5-2 5-1-3-5 5 3z" fill="#a85a1c" /><circle cx="10" cy="10" r="5" fill="#f0861a" /><circle cx="10" cy="10" r="3" fill="#fff4a0" /></Svg>,
  <Svg w={20} h={20}><path d="M1 1h18v18H1z" stroke="#999" strokeWidth=".7" /><path d="M4 19C4 10 9 4 18 4" stroke="#3d8ed4" strokeWidth="5" /><path d="M4 19C4 10 9 4 18 4" stroke="#c6e6fb" strokeWidth="2" /><path d="M0 0h3v3H0zM16 17h3v3h-3z" fill="#ddd" /></Svg>,
  <Svg w={20} h={20}><path d="M5 0h10v9H5z" fill="#c6ccd4" /><path d="M10 9v6M10 10l-7 5M10 10l7 5" stroke="#ddd" /><path d="M0 15h5v5H0zM7.500 15h5v5h-5zM15 15h5v5h-5z" fill="#c6ccd4" /></Svg>,
  <Svg w={20} h={20}><path d="M3 3c-3 4-3 10 0 14M6 2c-3 5-3 11 0 16" stroke="#999" /><ellipse cx="12.500" cy="10" rx="7" ry="8.500" fill="#c6ccd4" /><circle cx="13" cy="10" r="5" fill="#555" /><circle cx="13" cy="10" r="3" stroke="#ddd" strokeWidth="1.500" /></Svg>,
  <Svg w={20} h={20}><path d="M0 0h20v15H0z" fill="#e3e9f0" /><path d="M7 5l2-1h5v6l-2 2H7z" stroke="#333" strokeWidth="1.200" /><path d="M8 15h4v3H8zM4 18h12v1.500H4z" fill="#c6ccd4" /></Svg>,
  <Svg w={20} h={20}><path d="M2 19L13 5" stroke="#b06a5c" strokeWidth="2.500" /><path d="M7 2l5-2 5 4 2 5-3 1-2-4-3-1z" fill="#b5bac2" /></Svg>,
];

const CommandPanel = () => (
  <div className="flex flex-1 border-b border-black bg-[#444] pl-px">
    <div className="flex w-[180px] flex-col">
      <div className="flex h-7 shrink-0 items-end border-b border-black pl-px">
        {cmdTabs.map((t, i) => (
          <div key={i} className={i === 1 ? "-mb-px flex h-[26px] w-[29px] items-center justify-center rounded-t border border-b-0 border-black bg-[#444]" : "flex h-[24px] w-[29px] items-center justify-center rounded-t border border-b-0 border-black bg-[#3f3f3f]"}>{t}</div>
        ))}
      </div>
      <div className="flex pl-[10px] pt-[5px]">
        <div className="h-[21px] w-[146px] border-2 border-b-[#4c4c4c] border-l-black border-r-[#4c4c4c] border-t-black bg-[#555]" />
        <div className="ml-1 h-[20px] w-[17px] border border-black bg-[#8b0a3b]" />
      </div>
      <div className="ml-[10px] mt-1 flex h-6 w-[165px] shrink-0 items-center border-2 border-b-[#333] border-l-black border-r-[#333] border-t-black bg-[#555] pl-[2px] text-[12px] text-[#d8d8d8]">
        <span className="flex-1">修改器列表</span><div className="flex h-full w-[17px] items-center justify-center bg-white"><Down /></div>
      </div>
      <div className="ml-1 mt-[7px] grid w-[168px] shrink-0 grid-cols-2 gap-x-[2px] gap-y-[2.700px] text-[12px] tracking-[-0.1px] text-[#181818]">
        {modifiers.map((m) => <div key={m} className="flex h-5 items-center justify-center border border-b-black border-l-[#383838] border-r-black border-t-[#383838]"><span className="pt-px leading-none">{m}</span></div>)}
      </div>
      <div className="ml-[10px] mt-[9px] h-[127px] w-[162px] shrink-0 border border-[#999]"><div className="h-full border border-white bg-[#555]" /></div>
      <div className="flex h-[38px] shrink-0 items-center pb-2 pl-[14px]">
        <Svg w={17} h={12}><path d="M0 6h6M6 2v8h2V8h4v2h4V2h-4v2H8V2z" stroke="#ddd" fill="#bbb" /></Svg>
        <div className="ml-[8px] h-4 w-px bg-black" />
        <div className="ml-[14px]"><Svg w={10} h={14}><path d="M0 0l2 2v12M9 0L7 2v12" stroke="#eee" strokeWidth="1.500" /></Svg></div>
        <div className="ml-[13px] h-4 w-px bg-black" />
        <div className="ml-[8px]"><Svg w={16} h={14}><path d="M1 0l4 7M15 0l-4 7M4 7l4 6 4-6-4 2z" stroke="#ddd" strokeWidth="1.300" /></Svg></div>
        <div className="ml-[10px]"><Svg w={12} h={14}><path d="M2 6h8v5l-2 2H4l-2-2zM3 5l2-4 5 2M4 8h4" stroke="#ddd" strokeWidth="1.300" /></Svg></div>
        <div className="ml-[12px] h-4 w-px bg-black" />
        <div className="ml-[8px]"><Svg w={16} h={15}><path d="M1 1h12v12H1z" fill="#eee" stroke="#fff" /><path d="M2 2h11v3H2z" fill="#1414c8" /><path d="M2 5v8" stroke="#1414c8" /><path d="M6 7h4v3H6zM11 7h4v3h-4zM6 11h4v3H6zM11 11h4v3h-4z" fill="#555" stroke="#ddd" strokeWidth=".7" /></Svg></div>
      </div>
      <div className="ml-[3px] h-[3px] w-[175px] shrink-0 border-b-2 border-t border-b-black border-t-[#333]" />
      <div className="ml-[3px] mt-[7px] h-[429px] w-[174px] shrink-0 border border-b-[#333] border-l-[#444] border-r-[#333] border-t-black" />
    </div>
    <div className="ml-[6px] mt-[29px] h-[830px] flex-1 border border-r-0 border-black" />
  </div>
);

/* ---------- save dialog ---------- */
const files = [
  ["3ds", "2019/3/21 13:26", "文件夹", ""], ["vr", "2019/3/21 14:42", "文件夹", ""],
  ["slfs02VR.max", "2019/3/21 15:00", "MAX 文件", "5,568 KB"], ["slfs023DS.max", "2019/3/20 21:33", "MAX 文件", "6,268 KB"],
];
const places: [string, React.ReactNode][] = [
  ["最近使用的项目", <Svg w={32} h={32}><path d="M14 4h12v16H14z" fill="#f4f4f4" stroke="#bbb" /><path d="M17 7h7M17 10h7M17 13h7" stroke="#9ab" /><circle cx="9" cy="10" r="8" fill="#dfe9ee" stroke="#aab4ba" strokeWidth="1.500" /><path d="M9 4v6h5" stroke="#567" strokeWidth="1.200" /><path d="M8 16h13l2 7-16 3z" fill="#4aa8d8" stroke="#fff" /><path d="M2 24l4-6h20l4 6-12 6z" fill="none" stroke="#8a9298" strokeWidth="1.500" /><path d="M2 24l15 4 13-6v3l-13 6-15-4z" fill="#a3abb0" /></Svg>],
  ["桌面", <Svg w={32} h={26}><path d="M1 1h30v23H1z" fill="url(#gDesk)" stroke="#b5bcc6" strokeWidth="1.500" /><path d="M2 20h28v3H2z" fill="#23344f" /><circle cx="5" cy="20.500" r="2.500" fill="#6cc3f0" /><circle cx="5" cy="20" r="1.200" fill="#e8702a" /></Svg>],
  ["我的文档", <Svg w={32} h={32}><path d="M12 5h8l4 3v22l-12 1z" fill="#f6f8fa" stroke="#aaa" strokeWidth=".7" /><path d="M14 10h8M14 13h8M14 16h5M14 19h8M14 22h8M14 25h8" stroke="#9ab4c8" /><path d="M18 15h4v3h-4z" fill="#4aa8d8" /><path d="M3 1l17 2v3l-8-1-3 3v23l-6-2z" fill="url(#gFold)" stroke="#d0b050" strokeWidth=".6" /><path d="M9 8v23" stroke="#c9a84a" /></Svg>],
  ["计算机", <Svg w={32} h={30}><path d="M2 6l6-3v18l-6 1z" fill="#c3c8ce" stroke="#777" strokeWidth=".7" /><circle cx="4" cy="9" r="1.200" fill="#3c3" /><path d="M9 2l21 2-2 17-19-3z" fill="#dfe4ea" stroke="#889" strokeWidth=".7" /><path d="M11 4l17 1.500-2 13-15-2z" fill="url(#gScreen)" /><path d="M16 20l5 1 1 4h-6z" fill="#b5bac0" /><ellipse cx="20" cy="26" rx="8" ry="2.500" fill="#c6cbd1" /></Svg>],
  ["WPS网盘", <Svg w={32} h={26}><path d="M13 22H8c-8-1-8-11-1-12C8 1 20-1 23 8c9 1 9 13 1 14.500M13 22h6c4-1 4-7 0-7" stroke="#3f86ee" strokeWidth="3" strokeLinecap="round" /></Svg>],
];
const Btn = ({ w, children }: Kids & { w: string }) => <div className={w + " flex h-[23px] items-center justify-center border border-b-black border-l-[#333] border-r-black border-t-[#333] text-[12px] text-[#c8c8c8]"}>{children}</div>;

const SaveDialog = () => (
  <div className="absolute left-[301px] top-[289px] flex h-[667px] w-[979px] flex-col rounded-t-[6px] border border-b-[#1fc4e8] border-l-white border-r-[#3fd2ee] border-t-white bg-[#b9d1ea] px-[6px] pb-[6px] shadow-[0_0_0_1px_#111]">
    <div className="-mx-[6px] flex h-7 shrink-0 items-center rounded-t-[5px] bg-gradient-to-b from-[#98b4d2] to-[#b9d1ea] pl-2 pr-2">
      <MaxFile />
      <div className="ml-1 flex-1 pt-[3px] text-[12px] text-black">文件另存为</div>
      <div className="mt-px flex h-[17px] w-[31px] items-center justify-center rounded-sm border border-[#4b1420] bg-gradient-to-b from-[#e8a59b] via-[#c5483a] to-[#d98070]"><Svg w={12} h={10}><path d="M2 1l8 8M10 1L2 9" stroke="#555" strokeWidth="4" /><path d="M2 1l8 8M10 1L2 9" stroke="#fff" strokeWidth="2.200" /></Svg></div>
    </div>
    <div className="flex flex-1 bg-[#444] text-[12px] text-[#c4c4c4]">
      <div className="flex w-[99px] shrink-0 flex-col">
        <div className="mt-[9px] h-[17px] pr-[12px] text-right">历史记录:</div>
        <div className="mt-[16px] h-[18px] pr-[7px] text-right">保存在(<u>I</u>):</div>
        <div className="ml-[6px] mt-[5px] flex h-[559px] w-[89px] flex-col bg-[#f2f2f2] pt-[6px] text-black">
          {places.map(([n, ic]) => (
            <div key={n} className="flex h-[62px] w-[88px] flex-col items-center">
              <div className="flex h-[33px] items-center">{ic}</div>
              <div className="whitespace-nowrap leading-[18px] tracking-[-0.1px]">{n}</div>
            </div>
          ))}
        </div>
      </div>
      <div className="flex w-[716px] shrink-0 flex-col">
        <div className="mt-[7px] flex h-[20px] items-center justify-between border-2 border-b-[#333] border-l-black border-r-[#333] border-t-black bg-gradient-to-b from-[#e6f5fd] from-50% to-[#a5dcf7] to-50% pl-[1px] pr-[3px] text-black"><span className="pt-[2px] tracking-[-0.65px]">C:\Users\Administrator\Desktop\<span className="tracking-[-0.2px]">合作相关\云家陪\餐椅</span></span><Down /></div>
        <div className="mt-[14px] flex h-[23px] items-center">
          <div className="flex h-[23px] w-[261px] border-2 border-b-[#333] border-l-black border-r-[#333] border-t-black bg-white text-black">
            <div className="flex flex-1 items-center gap-[5px] border border-[#555] pl-1"><Folder h={16} /><span className="pt-px">餐椅</span></div>
            <div className="flex w-[18px] items-center justify-center"><Down /></div>
          </div>
          <div className="ml-[16px] flex items-center gap-[8px]">
            <Svg w={15} h={15}><circle cx="7.500" cy="7.500" r="7" fill="#666" stroke="#8c8c8c" /><path d="M3 7.500l4-4v3h5v2H7v3z" fill="#fff" /></Svg>
            <Svg w={15} h={15}><path d="M1 4h5l1 2h6v8H1z" fill="#f2cf5c" /><path d="M1 14l2-6h10l-2 6z" fill="#fbe594" /><path d="M8 10c2-1 2-3 1.500-5H6l4-5 4 5h-2c.5 4-1 6-4 7z" fill="#2eaa1e" stroke="#0d660a" strokeWidth=".5" /></Svg>
            <Svg w={15} h={15}><path d="M1 2h5l1 2h6v9H1z" fill="#f2cf5c" /><path d="M1 13l3-7h11l-3 7z" fill="#fbe594" /><circle cx="13" cy="3" r="2.300" fill="#e8521c" /></Svg>
            <Svg w={15} h={14}><path d="M.5.500h14v13H.500z" fill="#fff" stroke="#1c62c8" /><path d="M1 1h13v3H1z" fill="#1c62c8" /><path d="M3 6h2v2H3zM10 6h2v2h-2zM6.500 10h2v2h-2z" fill="#c33" /><path d="M6.500 6h2v2h-2zM3 10h2v2H3zM10 10h2v2h-2z" fill="#247" /></Svg>
          </div>
          <div className="ml-[4px]"><Down c="#222" /></div>
        </div>
        <div className="mt-[5px] flex h-[481px] flex-col bg-white text-black">
          <div className="flex h-[23px] shrink-0 border-b border-[#d5d5d5] bg-gradient-to-b from-white from-40% to-[#f0f1f3] leading-[23px]">
            <div className="relative w-[306px] border-b border-r border-[#96d9f9] bg-gradient-to-b from-[#f2fafe] from-40% to-[#dceef8] to-40% pl-[6px]">名称<span className="absolute left-[149px] top-[1px]"><Svg w={7} h={4}><path d="M0 4h7L3.500 0z" fill="#5a9ab8" /></Svg></span></div>
            <div className="w-[135px] border-r border-[#dedfe1] pl-[6px]">修改日期</div>
            <div className="w-[135px] border-r border-[#dedfe1] pl-[6px]">类型</div>
            <div className="w-[90px] border-r border-[#dedfe1] pl-[6px]">大小</div>
          </div>
          <div className="flex flex-1">
            <div className="w-[306px] border-r border-[#e8f1fb] pt-[1px]">
              {files.map((f, i) => <div key={f[0]} className="flex h-[21px] items-center pl-2 tracking-[0.2px]">{i < 2 ? <Folder h={16} /> : <MaxFile />}<span className={i < 2 ? "ml-[4px]" : "ml-[2px]"}>{f[0]}</span></div>)}
            </div>
            <div className="w-[135px] border-r border-[#e8f1fb] pt-[1px]">{files.map((f) => <div key={f[0]} className="h-[21px] pl-[6px] leading-[21px] tracking-[0.2px]">{f[1]}</div>)}</div>
            <div className="w-[135px] border-r border-[#e8f1fb] pt-[1px]">{files.map((f) => <div key={f[0]} className="h-[21px] pl-[6px] leading-[21px] tracking-[0.3px]">{f[2]}</div>)}</div>
            <div className="w-[90px] border-r border-[#e8f1fb] pt-[1px]">{files.map((f) => <div key={f[0]} className="h-[21px] pr-[7px] text-right leading-[21px] tracking-[0.2px]">{f[3]}</div>)}</div>
          </div>
        </div>
        <div className="mt-[9px] flex h-[22px] items-center">
          <div className="w-[96px] pl-[2px] pt-[5px]">文件名(<u>N</u>):</div>
          <div className="flex h-[21px] flex-1 items-center justify-between border-2 border-b-[#333] border-l-black border-r-[#333] border-t-black bg-white pl-[2px] pr-[3px]"><span className="bg-[#3399ff] leading-[14px] tracking-[-0.5px] text-white">slfs02VR.max</span><Down /></div>
        </div>
        <div className="mt-[6px] flex h-[20px] items-center">
          <div className="w-[96px] pl-[2px] pt-[2px]">保存类型(<u>T</u>):</div>
          <div className="flex h-[19px] flex-1 items-center justify-between border-2 border-b-[#333] border-l-black border-r-[#333] border-t-black bg-gradient-to-b from-[#f0f0f0] from-50% to-[#cfcfcf] pl-[1px] pr-[3px] font-['Liberation_Mono'] text-[11px] tracking-[-0.6px] text-black"><span>3ds Max (*.max)</span><Down /></div>
        </div>
      </div>
      <div className="flex flex-1 flex-col pl-1">
        <div className="mt-[41px] h-[17px] w-[125px] text-center">缩略图</div>
        <div className="mt-[11px] h-[132px] w-[132px] border border-b-white border-l-[#999] border-r-white border-t-[#999]" />
        <div className="mt-[358px] flex pl-[10px]"><Btn w="w-[24px]">+</Btn><div className="ml-2"><Btn w="w-[90px]"><span className="pr-[2px]">保存(<u>S</u>)</span></Btn></div></div>
        <div className="mt-[4px] pl-[42px]"><Btn w="w-[90px]"><span className="pr-[2px]">取消</span></Btn></div>
        <div className="mr-px mt-[8px] flex justify-end"><Svg w={10} h={11}><path d="M8 0h2v2H8zM4 4h2v2H4zM8 4h2v2H8zM0 8h2v2H0zM4 8h2v2H4zM8 8h2v2H8z" fill="#111" /></Svg></div>
      </div>
    </div>
  </div>
);

/* ---------- status bar ---------- */
const Box = ({ w, children }: Kids & { w: string }) => <div className={w + " flex h-[21px] shrink-0 items-center overflow-hidden whitespace-nowrap border border-b-[#555] border-l-black border-r-[#555] border-t-black pl-[5px] pt-px leading-[18px]"}>{children}</div>;
const Num = ({ children }: Kids) => <div className="flex h-[21px] w-[58px] shrink-0 items-center overflow-hidden whitespace-nowrap border-2 border-b-[#555] border-l-black border-r-[#555] border-t-black bg-[#555] pl-[1px] text-[11px] tracking-[-0.3px] text-[#111]">{children}</div>;
const NavSep = () => <div className="h-4 w-px bg-black" />;

const StatusBar = () => (
  <div className="flex h-[50px] shrink-0 bg-[#444] text-[12px] text-[#c8c8c8]">
    <div className="flex w-[1452px] shrink-0 flex-col">
      <div className="flex h-[25px] items-start pt-[3px]">
        <div className="flex h-[22px] w-[61px] shrink-0 items-center border-r-2 border-t-2 border-[#eee] bg-[#dcc0c4] pl-px font-['Liberation_Mono'] text-[11px] tracking-[-0.6px] text-black">actionMan</div>
        <div className="ml-[4px] mr-[3px] h-[22px] w-px shrink-0 bg-black" />
        <Box w="w-[953px]">未选定任何对象</Box>
        <div className="flex h-5 w-[28px] shrink-0 items-center justify-center"><Svg w={10} h={16}><circle cx="5" cy="5" r="4.500" fill="#a8a8a8" stroke="#222" /><path d="M3 9h4v6H3z" fill="#888" stroke="#222" strokeWidth=".5" /></Svg></div>
        <div className="flex h-5 w-[26px] shrink-0 items-center justify-center"><Svg w={11} h={13}><path d="M.5 6h10v7H.500z" fill="#c8c8c8" /><path d="M2.500 6V3.500c0-3.500 6-3.500 6 0V6" stroke="#bbb" strokeWidth="1.500" /><path d="M5.500 8v3" stroke="#333" /></Svg></div>
        <div className="flex h-5 w-[28px] shrink-0 items-center justify-center"><Svg w={14} h={14}><path d="M0 0h14v14H0z" fill="#eee" /><circle cx="7" cy="7" r="3.500" stroke="#333" /><path d="M7 0v4M7 10v4M0 7h4M10 7h4" stroke="#333" /></Svg></div>
        <div className="w-[12px] shrink-0 pt-px leading-5">X:</div><Num>-111.176m</Num>
        <div className="w-[24px] shrink-0 pl-[13px] pt-px leading-5">Y:</div><Num>2382.567m</Num>
        <div className="w-[24px] shrink-0 pl-[14px] pt-px leading-5">Z:</div><Num>0.0mm</Num>
        <div className="ml-[15px] tracking-[-0.25px]"><Box w="w-[99px]">栅格 = 100.0mm</Box></div>
      </div>
      <div className="flex h-[25px] items-start pt-[3px]">
        <Box w="w-[1324px]"><span className="w-[225px] shrink-0 text-right">单击并拖动以选择并移动对象</span></Box>
        <div className="flex h-[21px] w-[28px] shrink-0 items-center justify-center"><Svg w={14} h={14}><path d="M1 4l3-3h9v9l-3 3H1z" fill="#444" stroke="#eee" strokeWidth="1.800" /><path d="M4 4h6v7H4z" fill="#eee" /></Svg></div>
        <Box w="w-[99px]">添加时间标记</Box>
      </div>
    </div>
    <div className="ml-[3px] mt-[3px] flex h-[44px] w-[42px] shrink-0 items-center justify-center border border-black"><Svg w={26} h={12}><circle cx="5" cy="6" r="4" stroke="#000" strokeWidth="2.200" /><path d="M9 6h15M20 6v5M24 6v4" stroke="#000" strokeWidth="2.500" /></Svg></div>
    <div className="ml-[3px] mt-[3px] flex w-[66px] shrink-0 flex-col gap-[3px]">
      <div className="flex h-[21px] items-center whitespace-nowrap border border-b-black border-l-[#333] border-r-black border-t-[#333] pl-px pt-px leading-[18px]">自动关键点</div>
      <div className="flex h-[21px] items-center whitespace-nowrap border border-b-black border-l-[#333] border-r-black border-t-[#333] pl-px leading-[18px]">设置关键点</div>
    </div>
    <div className="ml-1 flex flex-1 flex-col">
      <div className="flex h-[28px] items-center">
        <div className="flex h-[20px] w-[112px] shrink-0 items-center justify-between border-2 border-b-[#333] border-l-black border-r-[#333] border-t-black bg-gradient-to-b from-white to-[#ccc] pl-[1px] pr-1 leading-[16px] text-black"><span>选定对象</span><Down /></div>
        <div className="ml-[14px] flex shrink-0 items-center">
          <Svg w={16} h={12}><path d="M1 0v12M3 6l6-5v10zM9 6l6-5v10z" stroke="#c8c8c8" strokeWidth="1.300" /></Svg>
          <div className="ml-[6px]"><NavSep /></div>
          <div className="ml-[4px]"><Svg w={16} h={12}><path d="M1 6l6-5v10zM9.500 1v10M12 1v10M15 1v10" stroke="#c8c8c8" strokeWidth="1.400" /></Svg></div>
          <div className="ml-[10px]"><Svg w={10} h={12}><path d="M1 1l8 5-8 5z" stroke="#c8c8c8" strokeWidth="1.300" /><path d="M15 11v4h-4z" fill="#fff" /></Svg></div>
          <div className="ml-[10px]"><Svg w={16} h={12}><path d="M15 6L9 1v10zM1 1v10M3.500 1v10M6.500 1v10" stroke="#c8c8c8" strokeWidth="1.400" /></Svg></div>
          <div className="ml-[6px]"><NavSep /></div>
          <div className="ml-[4px]"><Svg w={16} h={12}><path d="M15 0v12M1 1l6 5-6 5zM7 1l6 5-6 5z" stroke="#c8c8c8" strokeWidth="1.300" /></Svg></div>
        </div>
        <div className="ml-[8px] flex shrink-0 gap-[6px]">
          <Svg w={17} h={17}><circle cx="6" cy="6" r="5" fill="#dfe8e4" /><path d="M10 10l4 5M11 3h5M13.500 1v5M11 7h5" stroke="#ccc" strokeWidth="1.500" /></Svg>
          <Svg w={17} h={17}><path d="M1 1h6v6H1zM9 1h6v6H9zM1 9h6v6H1z" fill="#e8eef0" /><circle cx="11" cy="11" r="3" fill="#bcd" /><path d="M13 13l3 3" stroke="#ccc" strokeWidth="2" /></Svg>
          <Svg w={17} h={17}><path d="M1 5V1h4M11 1h4v4M1 11v4h4M15 11v4h-4" stroke="#ddd" strokeWidth="1.500" /><path d="M5 5h6v6H5z" fill="#6b9e50" /><path d="M18 14v4h-4z" fill="#fff" /></Svg>
          <Svg w={17} h={17}><path d="M5 1h5v6H5zM11 1h5v6h-5zM11 8h5v6h-5z" fill="#e8eef0" /><path d="M1 8h8v8H1z" fill="#6b9e50" /></Svg>
        </div>
      </div>
      <div className="flex h-[22px] items-start">
        <div className="h-[20px] w-[212px] shrink-0 border-2 border-b-[#555] border-l-black border-r-[#555] border-t-black bg-[#4a4a4a]" />
        <div className="ml-[1px] flex h-[17px] w-[10px] shrink-0 flex-col items-center justify-center gap-[5px] border border-black"><div className="rotate-180"><Down c="#ccc" w={5} /></div><Down c="#ccc" w={5} /></div>
        <div className="ml-[7px] flex shrink-0 gap-[5px]">
          <Svg w={17} h={17}><path d="M1 0h10v13H1z" fill="#e8eef6" /><path d="M3 2h5v5H3z" fill="#1c5fb0" /><circle cx="12" cy="12" r="4" fill="#eee" stroke="#333" /><path d="M12 10v2h2" stroke="#333" /></Svg>
          <Svg w={17} h={17}><path d="M1 1h10v10H1z" stroke="#ddd" strokeDasharray="2 1.500" /><circle cx="11" cy="11" r="3" fill="#bdd" /><path d="M13 13l3 3" stroke="#ccc" strokeWidth="2" /></Svg>
          <Svg w={17} h={17}><path d="M5 16L1 9l2-1 2 3V2h2v6l1-8h2v8l2-6 1 1v7l2-3 1 1-4 8z" fill="#eee" /><path d="M19 14v4h-4z" fill="#fff" /></Svg>
          <Svg w={17} h={17}><circle cx="8" cy="8" r="5" stroke="#9ab" strokeWidth="1.500" /><path d="M8 1l3 3H5zM4 7h7v5H4z" fill="#6b9e50" /><path d="M2 15l3-2M14 14l-3-2" stroke="#eee" strokeWidth="2" /><path d="M19 14v4h-4z" fill="#fff" /></Svg>
          <Svg w={17} h={17}><path d="M1 1h10v9H1z" fill="#eee" /><path d="M3 3l6 6M3 7V3h4" stroke="#222" strokeWidth="1.300" /><path d="M5 12h9V4" stroke="#ddd" strokeWidth="1.500" /></Svg>
        </div>
      </div>
    </div>
  </div>
);

const FloatWindow = () => (
  <div className="absolute left-0 top-[1007px] flex h-[27px] w-[153px] items-center rounded-tr-md border border-l-0 border-[#8396ad] bg-gradient-to-b from-[#dbe6f2] to-[#c3d3e4] text-[13px] text-[#444]">
    <MaxFile />
    <span className="ml-[3px] w-[33px]">材...</span>
    {[0, 1, 2].map((i) => (
      <div key={i} className="mr-[3px] flex h-[17px] w-[30px] items-center justify-center rounded-sm border border-[#8a9bb0] bg-[#cfdcea]">
        <Svg w={13} h={11}>
          {i === 0 && <path d="M5 1h7v6H9M1 4h7v6H1z" fill="#fff" stroke="#555" strokeWidth="1.400" />}
          {i === 1 && <path d="M1 1h10v8H1zM4 4h4v2H4z" fill="#fff" stroke="#555" strokeWidth="1.400" />}
          {i === 2 && <><path d="M2 1l8 8M10 1L2 9" stroke="#555" strokeWidth="4" /><path d="M2 1l8 8M10 1L2 9" stroke="#fff" strokeWidth="1.800" /></>}
        </Svg>
      </div>
    ))}
  </div>
);

const ImeBar = () => (
  <div className="absolute left-[1538px] top-[1008px] flex h-[26px] w-[206px] items-end">
    <div className="ml-[20px] flex h-[22px] flex-1 items-center bg-white pl-[13px] text-[#1c73c8]">
      <div className="w-[24px] text-[15px] font-bold leading-none">英</div>
      <div className="w-[20px]"><Svg w={12} h={12}><circle cx="3" cy="3" r="2" fill="#1c73c8" /><path d="M9 7c2 1 1 4-1 5" stroke="#1c73c8" strokeWidth="2" /></Svg></div>
      <Smile className="mr-[7px] size-[17px]" />
      <div className="mr-[6px]"><Svg w={14} h={16}><rect x="4" y="0" width="6" height="10" rx="3" fill="#1c73c8" /><path d="M1.500 6v1.500a5.500 5 0 0011 0V6M7 12v3" stroke="#1c73c8" strokeWidth="1.800" /></Svg></div>
      <Keyboard className="mr-[6px] size-[18px]" />
      <div className="mr-[4px]"><Svg w={16} h={16}><circle cx="6" cy="4" r="3" fill="#aebfdc" /><path d="M0 14c0-8 12-8 12 0z" fill="#aebfdc" /><text x="5" y="15" fontSize="9" fontWeight="bold" fill="#8fa6cf" fontFamily="Liberation Sans">20</text></Svg></div>
      <Shirt className="mr-[6px] size-[16px]" fill="currentColor" />
      <LayoutGrid className="size-[16px]" fill="currentColor" />
    </div>
    <div className="absolute left-0 top-0"><Svg w={28} h={26}><rect x="2" y="2" width="23" height="22" rx="4" fill="#f0532a" transform="rotate(-10 13 13)" /><path d="M19 7C14 4 7 6 8 10s10 2 10 6-8 5-11 2" stroke="#fff" strokeWidth="3.200" /></Svg></div>
  </div>
);

/* ---------- taskbar ---------- */
const FolderBig = <Folder w={25} h={31} />;
const MaxBig = <div className="flex h-[31px] w-[31px] flex-col items-center bg-gradient-to-br from-white to-[#cfe0e0]"><MaxMark s={25} /><span className="-mt-[2px] font-['Liberation_Sans'] text-[8px] font-bold leading-[8px] text-[#333]">MAX</span></div>;
const tasks: [string, React.ReactNode, string][] = [
  ["slfs02V...", MaxBig, "w-[100px] ml-0"],
  ["ZHhjmj...", MaxBig, "w-[101px] ml-px"],
  ["134.17...", <Svg w={31} h={31}><circle cx="15.500" cy="15.500" r="15" fill="#ee7d1c" stroke="#b85a0c" /><path d="M5 24c0-7 4-9 5-13 2-4 6-7 11-8l-2 4 7 4-2 5-5-1c-3 0-3 3-2 6-4-2-8 1-12 3z" fill="#fff" /><path d="M10 14l6-3M18 9l3 1" stroke="#ee7d1c" strokeWidth="1.300" /></Svg>, "w-[101px] ml-[3px]"],
  ["Adobe...", <Svg w={30} h={30}><path d="M1 1h28v28H1z" fill="#041c30" stroke="#2fa3f7" strokeWidth="1.500" /><text x="6" y="21" fontSize="17" fill="#4db8ff" fontFamily="Open Sans">Ps</text></Svg>, "w-[100px] ml-[4px]"],
  ["微信", <Svg w={32} h={30}><ellipse cx="12" cy="11" rx="11.500" ry="10" fill="#6cc331" /><path d="M5 18l-1 6 6-3z" fill="#6cc331" /><circle cx="8" cy="8" r="1.400" fill="#23480c" /><circle cx="16" cy="8" r="1.400" fill="#23480c" /><ellipse cx="22" cy="19" rx="9.500" ry="8" fill="#f2f2f2" /><circle cx="19" cy="17" r="1.200" fill="#666" /><circle cx="25" cy="17" r="1.200" fill="#666" /></Svg>, "w-[99px] ml-[4px]"],
  ["Everyth...", <Svg w={28} h={31}><path d="M4 0h17l6 6v25H4z" fill="#fafafa" stroke="#aaa" /><circle cx="15" cy="14" r="7" stroke="#b85a0c" strokeWidth="4.500" /><circle cx="15" cy="14" r="7" stroke="#f58a18" strokeWidth="3" /><path d="M10 20l-7 9" stroke="#ee7d10" strokeWidth="4" strokeLinecap="round" /></Svg>, "w-[99px] ml-[3px]"],
  ["482399...", FolderBig, "w-[100px] ml-[3px]"],
  ["餐椅", FolderBig, "w-[100px] ml-px"],
  ["3ds", FolderBig, "w-[101px] ml-px"],
  ["vr", FolderBig, "w-[100px] ml-px"],
  ["0.5Mφ...", FolderBig, "w-[100px] ml-px"],
  ["3ds", FolderBig, "w-[101px] ml-px"],
  ["vr", FolderBig, "w-[100px] ml-px"],
  ["云家配...", <Svg w={32} h={31}><circle cx="16" cy="16" r="15.500" fill="#f3f0ea" /><path d="M7 31c3-5 15-5 19 0z" fill="#5a7" /><path d="M8 13l10-4 7 4c1 9-4 15-8 15s-9-6-9-15z" fill="#f6cda6" /><path d="M4 22C-1 8 8 0 18 2c11 2 13 13 9 22l-2-3V14l-7-6c-2 4-7 6-9 7l-1 8z" fill="#b5622a" /><path d="M11 18h3M18 17h4" stroke="#3b2415" strokeWidth="1.800" /></Svg>, "w-[100px] ml-[4px]"],
  ["模型处...", <Svg w={30} h={31}><path d="M14 0l13 7v15l-13 8L1 22V7z" fill="#2c68e0" /><path d="M6 10l4 9 4-7 4 7 5-9" stroke="#fff" strokeWidth="2.500" /><rect x="16" y="18" width="13" height="14" rx="2" fill="#6a9cf6" /><path d="M19 23l2 6 2-4 2 4 2-6" stroke="#fff" strokeWidth="1.500" /></Svg>, "w-[99px] ml-[4px]"],
];

const Taskbar = () => (
  <div className="flex h-[34px] shrink-0 overflow-hidden border-t border-[#2d3a4a] bg-gradient-to-b from-[#8b9cb3] to-[#7388a3] text-white">
    <div className="flex w-[166px] shrink-0 pl-[2px] pt-px">
      <Svg w={38} h={38}><circle cx="19" cy="19" r="18" fill="url(#gOrb)" stroke="#233f5e" /><path d="M11 12c3-2 5-1 7 0l-1 7c-2-1-4-2-7 0z" fill="#e8562a" /><path d="M19 12c3 2 5 1 9 0l-1 7c-3 1-6 1-9 0z" fill="#7cc13c" /><path d="M10 20c3-2 5-1 7 0l-1 7c-2-1-4-2-7 0z" fill="#3c8fe0" /><path d="M18 20c3 2 5 1 9 0l-1 7c-3 1-6 1-9 0z" fill="#f8c92c" /></Svg>
      <div className="ml-[24px]"><Svg w={32} h={34}><circle cx="16" cy="19" r="12.500" stroke="#2492ea" strokeWidth="6.500" /><path d="M14 32c-2-6 3-8 6-6 2-6 10-4 10 1 3 1 3 5 0 6z" fill="#fff" /></Svg></div>
      <div className="ml-[26px] pt-[3px]"><Svg w={30} h={30}><path d="M1 2l22-2 2 19-20 3z" fill="#dfe4ea" stroke="#667" /><path d="M3 4l18-2 2 15-17 3z" fill="url(#gScreen)" /><path d="M6 26l14-3 3 5-14 2z" fill="#c3c8ce" /><circle cx="23" cy="23" r="7" fill="#eee" stroke="#888" /><path d="M20 20l3 3-3 3M26 20l-2 3 2 3" stroke="#2a9a2a" strokeWidth="1.800" /></Svg></div>
    </div>
    {tasks.map(([t, ic, w], i) => (
      <div key={i} className={w + " flex h-[40px] shrink-0 items-start border border-b-0 border-[#c3cedb] pt-[3px] " + (i === 0 ? "bg-gradient-to-br from-[#e2e8ee] via-[#c9d3de] to-[#b2bfce]" : "bg-gradient-to-br from-[#c2ccd8] via-[#94a5ba] to-[#899bb2]")}>
        <div className="flex w-[41px] shrink-0 justify-center pr-[2px]">{ic}</div>
        <div className="whitespace-nowrap pt-[7px] text-[12px] leading-[18px] [text-shadow:0_0_2px_#456]">{t}</div>
      </div>
    ))}
    <div className="ml-[9px] flex items-start gap-[9px] pt-[9px]">
      <div className="pr-px pt-[7px]"><Svg w={9} h={6}><path d="M0 5h9L4.500 0z" fill="#fff" /></Svg></div>
      <Svg w={15} h={18}><path d="M3 0h9v6H3z" fill="#eee" stroke="#345" /><path d="M5 2h2v2H5zM8 2h2v2H8z" fill="#333" /><path d="M0 6h15v9l-3 3H3l-3-3z" fill="#2c8fd0" /><path d="M7.500 8v7M5 11v2h5v-3" stroke="#fff" /></Svg>
      <Svg w={17} h={18}><path d="M2 1v16" stroke="#fff" strokeWidth="1.800" /><path d="M3 2c4-2 6 2 10 0v8c-4 2-6-2-10 0z" fill="#dde4ec" stroke="#fff" /><circle cx="12" cy="12" r="5" fill="#d8281c" /><path d="M10 10l4 4M14 10l-4 4" stroke="#fff" strokeWidth="1.500" /></Svg>
      <Svg w={17} h={18}><path d="M5 4h11v9H5z" fill="#5b7390" stroke="#fff" strokeWidth="1.500" /><path d="M1 1h4v5H1zM3 6v10h10M11 13v3" stroke="#fff" strokeWidth="1.400" /></Svg>
      <Svg w={17} h={18}><path d="M1 6h3l5-5v15l-5-5H1z" fill="#e8edf2" /><circle cx="11" cy="12" r="5" fill="#d8281c" /><path d="M9 10l4 4M13 10l-4 4" stroke="#fff" strokeWidth="1.500" /></Svg>
    </div>
    <div className="ml-auto w-[72px] pt-[2px] text-center text-[12px] leading-[17px]"><div>15:01</div><div>2019/3/21</div></div>
    <div className="ml-[2px] w-[8px] shrink-0 border-l border-[#4b5d74] bg-[#6e7f95]" />
  </div>
);

export default function App() {
  return (
    <div className="relative flex h-[1068px] w-[1908px] select-none flex-col overflow-hidden bg-[#444] font-['Open_Sans','Noto_Sans_CJK_SC',sans-serif]">
      <Defs />
      <Header />
      <Toolbar />
      <Ribbon />
      <div className="flex h-[865px] shrink-0">
        <div className="flex w-[1546px] shrink-0 flex-col">
          <div className="flex h-[835px]"><SideTools /><Explorer /><Viewport /></div>
          <PluginRow />
        </div>
        <CommandPanel />
      </div>
      <StatusBar />
      <Taskbar />

      <SaveDialog />
      <FloatWindow />
      <ImeBar />

      <div className="absolute left-[772px] top-0 flex h-[26px] w-[363px] rounded-b-sm bg-white text-[12px] leading-[20px] text-black">
        <span className="ml-[26px] w-[88px]">正在分享屏幕</span><span className="w-[58px]">01:37:42</span>
        <span className="h-[20px] w-[42px] border-l border-[#e4e4e4]" /><span>云家配王总正在观看</span>
      </div>

      <div className="pointer-events-none absolute left-0 top-0"><Svg w={560} h={490}>
        <path d="M17 26L33 44l-6 1.500C40 115 55 195 73 291 52 200 34 120 20 48l-7 1.500z" fill="#fa3634" />
        <ellipse cx="468" cy="463.500" rx="76" ry="11.500" stroke="#ee3530" strokeWidth="2.500" />
      </Svg></div>
    </div>
  );
}
